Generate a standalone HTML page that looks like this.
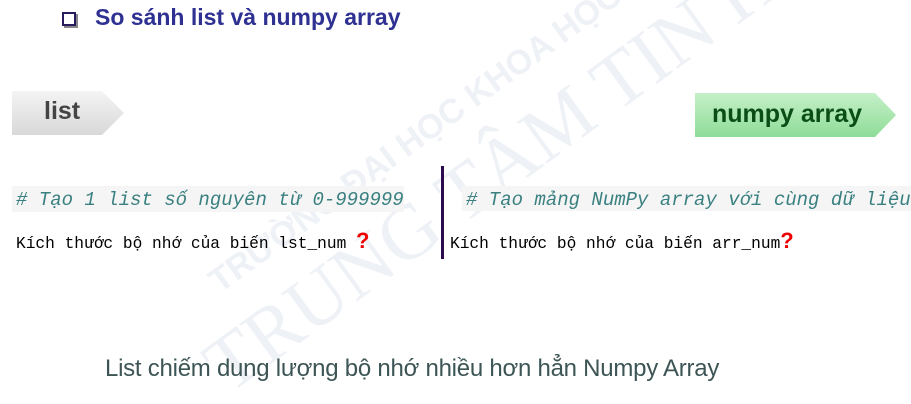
<!DOCTYPE html>
<html><head><meta charset="utf-8"><style>
*{margin:0;padding:0}
html,body{width:911px;height:404px;overflow:hidden}
body{background:#fff;position:relative;font-family:"Liberation Sans",sans-serif}
.a{position:absolute;white-space:nowrap}
.wm{color:#eef1f6;font-family:"Liberation Serif",serif;transform-origin:left bottom}
.mono{font-family:"Liberation Mono",monospace}
</style></head><body>
<div class="a wm" style="left:225px;top:262px;font-size:34px;font-weight:bold;transform:rotate(-36deg);font-family:'Liberation Sans',sans-serif;color:#eef1f6">TRƯỜNG ĐẠI HỌC KHOA HỌC TỰ NHIÊN</div>
<div class="a wm" style="left:240px;top:320px;font-size:78px;transform:rotate(-36deg)">TRUNG TÂM TIN HỌC</div>
<div class="a" style="left:62px;top:12px;width:10px;height:10px;border:2px solid #2a1a5e;box-shadow:2px 2px 0 #888"></div>
<div class="a" style="left:95px;top:4px;font-size:23px;font-weight:bold;color:#2e3192">So sánh list và numpy array</div>
<svg class="a" style="left:12px;top:91px" width="114" height="45"><defs><linearGradient id="g1" x1="0" y1="0" x2="0" y2="1"><stop offset="0" stop-color="#f4f4f4"/><stop offset="1" stop-color="#d8d8d8"/></linearGradient><linearGradient id="g2" x1="0" y1="0" x2="0" y2="1"><stop offset="0" stop-color="#c5f0c8"/><stop offset="1" stop-color="#8fdc98"/></linearGradient></defs><polygon points="0,0 90,0 112,22 90,44 0,44" fill="url(#g1)"/></svg>
<div class="a" style="left:44px;top:97px;font-size:25px;font-weight:bold;color:#444">list</div>
<svg class="a" style="left:695px;top:93px" width="203" height="45"><polygon points="0,0 180,0 201,22 180,44 0,44" fill="url(#g2)"/></svg>
<div class="a" style="left:712px;top:100px;font-size:25px;font-weight:bold;color:#0b4d17">numpy array</div>
<div class="a" style="left:12px;top:186px;width:392px;height:26px;background:#f5f5f5"></div>
<div class="a mono" style="left:16px;top:189px;font-size:19px;font-style:italic;color:#3a8080">#&nbsp;Tạo 1 list số nguyên từ 0-999999</div>
<div class="a mono" style="left:16px;top:228px;font-size:16.2px;color:#000">Kích thước bộ nhớ của biến lst_num <span style="font-family:'Liberation Sans';font-weight:bold;color:#e00;font-size:22px">?</span></div>
<div class="a" style="left:441px;top:166px;width:3px;height:93px;background:#2d0a50"></div>
<div class="a" style="left:462px;top:186px;width:449px;height:25px;background:#f5f5f5"></div>
<div class="a mono" style="left:466px;top:189px;font-size:19px;font-style:italic;color:#3a8080">#&nbsp;Tạo mảng NumPy array với cùng dữ liệu</div>
<div class="a mono" style="left:450px;top:228px;font-size:16.2px;color:#000">Kích thước bộ nhớ của biến arr_num<span style="font-family:'Liberation Sans';font-weight:bold;color:#e00;font-size:22px">?</span></div>
<div class="a" style="left:105px;top:355px;font-size:24px;color:#3d5555;letter-spacing:-0.25px">List chiếm dung lượng bộ nhớ nhiều hơn hẳn Numpy Array</div>
</body></html>
